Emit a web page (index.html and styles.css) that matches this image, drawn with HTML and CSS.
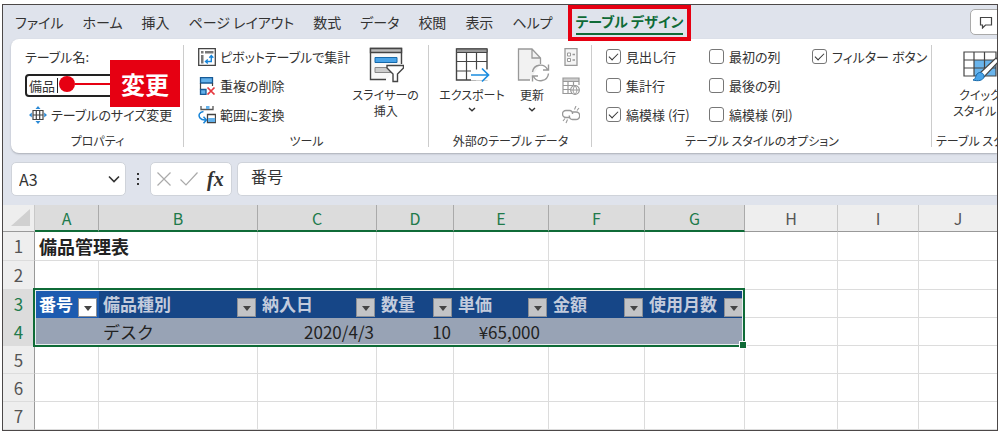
FILE: index.html
```html
<!DOCTYPE html>
<html lang="ja">
<head>
<meta charset="utf-8">
<meta name="viewport" content="width=device-width, initial-scale=1">
<title>備品管理表</title>
<link rel="stylesheet" href="styles.css">
</head>
<body>
<main class="window">
  <nav class="tabs">
    <button class="tab">ファイル</button>
    <button class="tab">ホーム</button>
    <button class="tab">挿入</button>
    <button class="tab">ページ レイアウト</button>
    <button class="tab">数式</button>
    <button class="tab">データ</button>
    <button class="tab">校閲</button>
    <button class="tab">表示</button>
    <button class="tab">ヘルプ</button>
    <button class="tab tab-active">テーブル デザイン</button>
    <button class="comment" aria-label="コメント">
      <svg width="14" height="13" viewBox="0 0 14 13"><path d="M1.5 1.5h11v7.5H6.5L3.5 12V9h-2z" fill="none" stroke="#444" stroke-width="1.2"/></svg>
    </button>
  </nav>

  <section class="ribbon">
    <div class="group group-properties">
      <div class="group-body rows">
        <label class="row" for="table-name">テーブル名:</label>
        <div class="row">
          <div class="name-field">
            <input id="table-name" type="text" value="備品">
            <span class="caret"></span>
            <span class="callout"><span class="callout-dot"></span><span class="callout-line"></span><strong class="callout-text">変更</strong></span>
          </div>
        </div>
        <button class="row command command-resize">
          <svg width="18" height="18" viewBox="0 0 18 18"><path d="M4 4.500h10v9H4zM4 9h10M7.300 4.500v9M10.700 4.500v9" fill="none" stroke="#444" stroke-width="1.200"/><path d="M9 0l2.500 3h-5zM9 18l2.500-3h-5zM0 9l2.800-2.500v5zM18 9l-2.800-2.500v5z" fill="#2b8ad6"/></svg>
          テーブルのサイズ変更
        </button>
      </div>
      <div class="group-name">プロパティ</div>
    </div>

    <div class="group group-tools">
      <div class="group-body">
        <div class="rows">
          <button class="row command">
            <svg width="18" height="18" viewBox="0 0 18 18"><path d="M.7.7h16.600v16.600H.7z" fill="#fff" stroke="#444" stroke-width="1.300"/><path d="M3 3h2.500v2.500H3zM7 3h8.500v2.500H7zM3 7h2.500v8.500H3z" fill="#777"/><path d="M13.300 8v5.500H8M11.300 9.800l2-2.300 2 2.300M9.800 11.500l-2.300 2 2.300 2" fill="none" stroke="#1784d8" stroke-width="1.400"/></svg>
            ピボットテーブルで集計
          </button>
          <button class="row command">
            <svg width="18" height="18" viewBox="0 0 18 18"><path d="M2.500.7h12V6h-12z" fill="#62b0ea" stroke="#175a96" stroke-width="1.300"/><path d="M2.500 6v6.500M14.500 6v3" stroke="#444" stroke-width="1.200"/><path d="M2.500 12.500h5.500v5H2.500z" fill="#62b0ea" stroke="#175a96" stroke-width="1.300"/><path d="M9.500 10.500l7 7M16.500 10.500l-7 7" stroke="#e5383f" stroke-width="1.700"/></svg>
            重複の削除
          </button>
          <button class="row command">
            <svg width="18" height="18" viewBox="0 0 18 18"><path d="M3 0v3.500h12V0" fill="#fff" stroke="#555" stroke-width="1.300"/><path d="M8 0h3.500v3H8z" fill="#62b0ea"/><path d="M9.500 8.500h8v8h-8z" fill="#fff" stroke="#444" stroke-width="1.300"/><path d="M10 12h7.200v4H10z" fill="#62b0ea"/><path d="M5.500 5.500C1 6 .2 9.500 2 12c1.500 2 3.500 2.200 6 2M5.500 10.800L8.500 14l-3 3.300" fill="none" stroke="#1784d8" stroke-width="1.500"/></svg>
            範囲に変換
          </button>
        </div>
        <button class="big">
          <svg width="36" height="36" viewBox="0 0 36 36"><path d="M18 32.500H2.500V1.500h31V17" fill="#f8f8f8" stroke="#444" stroke-width="1.400"/><path d="M2.500 1.500h31v4h-31z" fill="#bbb" stroke="#444" stroke-width="1.400"/><path d="M7 10.500h22v5H7z" fill="#48a3e8" stroke="#1669aa"/><path d="M7 20.500h12l4 5H7z" fill="#ccc" stroke="#888"/><path d="M19 18.500h16.500v2.500L29.500 27v7.500h-4.500V27L19 21z" fill="#fff" stroke="#444" stroke-width="1.400"/></svg>
          <span>スライサーの<br>挿入</span>
        </button>
      </div>
      <div class="group-name">ツール</div>
    </div>

    <div class="group group-external">
      <div class="group-body">
        <button class="big">
          <svg width="36" height="36" viewBox="0 0 36 36"><path d="M2.500 2h30.500v31H2.500z" fill="#fff"/><path d="M33 22V2H2.500v31H22" fill="none" stroke="#444" stroke-width="1.400"/><path d="M2.500 2H33v3.500H2.500z" fill="#999" stroke="#444"/><path d="M2.500 14.500H33M2.500 24H22M12.500 5v28M22.500 5v28M33 22v11H22" fill="none" stroke="#444" stroke-width="1.200"/><path d="M17 22.500h18v11H17z" fill="#fff"/><path d="M17 28h17M28 21.500l6.500 6.500-6.500 6.500" fill="none" stroke="#1b8de0" stroke-width="1.700"/></svg>
          <span>エクスポート</span>
          <svg class="chev" width="8" height="5" viewBox="0 0 8 5"><path d="M1 1l3 2.700L7 1" fill="none" stroke="#333" stroke-width="1.400"/></svg>
        </button>
        <button class="big big-refresh">
          <svg width="36" height="36" viewBox="0 0 36 36"><path d="M16 33H4.500V2H18l8 9v6" fill="#f2f2f2"/><path d="M16 33H4.500V2H18l8.500 9v6M18 2v9h8.500" fill="none" stroke="#999" stroke-width="1.300"/><path d="M18.500 25a8 8 0 0 1 15-2.500M34.500 26.500a8 8 0 0 1-15 3M34.500 17.500v5.500H29M18.500 34.500v-5.500H24" fill="none" stroke="#999" stroke-width="1.400"/></svg>
          <span>更新</span>
          <svg class="chev" width="8" height="5" viewBox="0 0 8 5"><path d="M1 1l3 2.700L7 1" fill="none" stroke="#333" stroke-width="1.400"/></svg>
        </button>
        <div class="rows">
          <button class="row command" aria-label="プロパティ"><svg width="18" height="18" viewBox="0 0 18 18"><path d="M3 .7h12v16.600H3z" fill="#f5f5f5" stroke="#999" stroke-width="1.300"/><path d="M5.500 5h3v3h-3zM5.500 10.500h3v3h-3z" fill="#fff" stroke="#999"/><path d="M10.500 6.500H13M10.500 12H13" stroke="#999" stroke-width="1.300"/></svg></button>
          <button class="row command" aria-label="ブラウザーで開く"><svg width="18" height="18" viewBox="0 0 18 18"><path d="M1 1h16v3H1z" fill="#ccc"/><path d="M10 16.500H1V1h16v7M1 4.500h16M1 8.500h10M1 12.500h8M6 4.500v12M11.500 4.500v4" fill="none" stroke="#999" stroke-width="1.200"/><circle cx="13" cy="13" r="4.300" fill="#fff" stroke="#999" stroke-width="1.200"/><path d="M8.700 13h8.600M13 8.700c-2.500 3-2.500 6 0 8.600M13 8.700c2.500 3 2.500 6 0 8.600" fill="none" stroke="#999"/></svg></button>
          <button class="row command" aria-label="リンク解除"><svg width="18" height="18" viewBox="0 0 18 18"><path d="M7.500 11.500H4a3.500 3.500 0 0 1 0-7h3.500c2 0 3.300 1.800 3 3.500M10.500 6H14a3.700 3.700 0 0 1 0 7.500h-3.500c-2 0-3.500-1.800-3-4" fill="none" stroke="#999" stroke-width="1.400"/><path d="M12.500 3.500L14 0M15 4.500L17 2M5.500 13.500L4 17M3 12.500L1 15" stroke="#999" stroke-width="1.100"/></svg></button>
        </div>
      </div>
      <div class="group-name">外部のテーブル データ</div>
    </div>

    <div class="group group-options">
      <div class="group-body checks">
        <label class="row"><input type="checkbox" checked>見出し行</label>
        <label class="row"><input type="checkbox">最初の列</label>
        <label class="row"><input type="checkbox" checked>フィルター ボタン</label>
        <label class="row"><input type="checkbox">集計行</label>
        <label class="row check-wide"><input type="checkbox">最後の列</label>
        <label class="row"><input type="checkbox" checked>縞模様 (行)</label>
        <label class="row check-wide"><input type="checkbox">縞模様 (列)</label>
      </div>
      <div class="group-name">テーブル スタイルのオプション</div>
    </div>

    <div class="group group-styles">
      <div class="group-body">
        <button class="big">
          <svg width="36" height="36" viewBox="0 0 36 36"><path d="M2 5h32v24H2z" fill="#fff"/><path d="M12 13h22v16H12z" fill="#69b4ec"/><path d="M2 5h32v24H2zM2 13h32M2 21h32M12 5v24M22.500 5v24" fill="none" stroke="#444" stroke-width="1.200"/><path d="M34 11l3 3-15 16-4-4z" fill="#fff" stroke="#444" stroke-width="1.200"/><path d="M17.500 25.500c3 0 5 2 4.500 4.500-1 3.500-6 4.500-11 3 3.500-1 2-6.500 6.500-7.500z" fill="#48a3e8" stroke="#1669aa"/></svg>
          <span>クイック<br>スタイル <svg width="8" height="5" viewBox="0 0 8 5"><path d="M1 1l3 2.700L7 1" fill="none" stroke="#333" stroke-width="1.400"/></svg></span>
        </button>
      </div>
      <div class="group-name">テーブル スタイル</div>
    </div>
  </section>

  <section class="formula">
    <div class="box cell-name">
      <input type="text" value="A3" aria-label="名前ボックス">
      <button aria-label="名前の一覧"><svg width="12" height="8" viewBox="0 0 12 8"><path d="M1 1.500l5 5 5-5" fill="none" stroke="#333" stroke-width="1.600"/></svg></button>
    </div>
    <svg class="dots" width="4" height="14" viewBox="0 0 4 14"><path d="M1 1h2v2H1zM1 6h2v2H1zM1 11h2v2H1z" fill="#333"/></svg>
    <div class="box actions">
      <button aria-label="キャンセル"><svg width="14" height="14" viewBox="0 0 14 14"><path d="M.5.5l13 13M13.500.5l-13 13" stroke="#aaa" stroke-width="1.200"/></svg></button>
      <button aria-label="入力"><svg width="18" height="14" viewBox="0 0 18 14"><path d="M.5 7.500L6 13 17.500.5" fill="none" stroke="#aaa" stroke-width="1.200"/></svg></button>
      <button class="fx" aria-label="関数の挿入">fx</button>
    </div>
    <input class="box formula-text" type="text" value="番号" aria-label="数式バー">
  </section>

  <table class="sheet">
    <colgroup>
      <col class="col-head"><col class="col-a"><col class="col-b"><col class="col-c"><col class="col-d"><col class="col-e"><col class="col-f"><col class="col-g"><col class="col-h"><col class="col-i"><col>
    </colgroup>
    <thead>
      <tr>
        <th class="corner"><svg width="20" height="20" viewBox="0 0 20 20"><path d="M19 1v17H0z" fill="#d0d0d0"/></svg></th>
        <th class="on">A</th><th class="on">B</th><th class="on">C</th><th class="on">D</th><th class="on">E</th><th class="on">F</th><th class="on">G</th><th>H</th><th>I</th><th>J</th>
      </tr>
    </thead>
    <tbody>
      <tr class="tall"><th>1</th><td class="title" colspan="2">備品管理表</td><td></td><td></td><td></td><td></td><td></td><td></td><td></td><td></td></tr>
      <tr class="tall"><th>2</th><td></td><td></td><td></td><td></td><td></td><td></td><td></td><td></td><td></td><td></td></tr>
      <tr>
        <th class="on">3</th>
        <td class="field current"><div>番号<button aria-label="番号のフィルター"></button></div><span class="selection"></span></td>
        <td class="field"><div>備品種別<button aria-label="備品種別のフィルター"></button></div></td>
        <td class="field"><div>納入日<button aria-label="納入日のフィルター"></button></div></td>
        <td class="field"><div>数量<button aria-label="数量のフィルター"></button></div></td>
        <td class="field"><div>単価<button aria-label="単価のフィルター"></button></div></td>
        <td class="field"><div>金額<button aria-label="金額のフィルター"></button></div></td>
        <td class="field"><div>使用月数<button aria-label="使用月数のフィルター"></button></div></td>
        <td></td><td></td><td></td>
      </tr>
      <tr>
        <th class="on">4</th>
        <td class="band"></td><td class="band">デスク</td><td class="band num">2020/4/3</td><td class="band num">10</td><td class="band num money">¥65,000</td><td class="band"></td><td class="band"></td>
        <td></td><td></td><td></td>
      </tr>
      <tr><th>5</th><td></td><td></td><td></td><td></td><td></td><td></td><td></td><td></td><td></td><td></td></tr>
      <tr><th>6</th><td></td><td></td><td></td><td></td><td></td><td></td><td></td><td></td><td></td><td></td></tr>
      <tr><th>7</th><td></td><td></td><td></td><td></td><td></td><td></td><td></td><td></td><td></td><td></td></tr>
    </tbody>
  </table>
</main>
</body>
</html>
```
FILE: styles.css
```css
*,
*::before,
*::after {
  box-sizing: border-box;
}

body {
  margin: 0;
  padding: 4px 2px 3px;
  background: #fff;
  color: #333;
  font-family: "Noto Sans CJK JP", sans-serif;
  font-size: 13px;
}

button,
input {
  margin: 0;
  padding: 0;
  border: 0;
  background: none;
  color: inherit;
  font: inherit;
}

svg {
  flex: none;
}

.window {
  overflow: hidden;
  border: 1px solid #4c4848;
  background: #dfe3ec;
}

/* Tabs */
.tabs {
  display: flex;
  align-items: center;
  gap: 19px;
  height: 34px;
  padding-left: 12px;
  font-size: 14px;
  font-feature-settings: "palt";
}

.tab {
  position: relative;
  flex: none;
  line-height: 24px;
  white-space: nowrap;
}

.tab-active {
  margin-left: 4px;
  border-bottom: 2px solid #0f6b37;
  color: #0f6b37;
  font-weight: 700;
}

.tab-active::after {
  content: "";
  position: absolute;
  z-index: 1;
  inset: -4px -8px -8px;
  border: 4px solid #e60012;
}

.comment {
  display: flex;
  flex: none;
  align-items: center;
  width: 60px;
  height: 26px;
  margin-left: auto;
  margin-right: -33px;
  padding-left: 8px;
  border: 1px solid #aaa;
  border-radius: 5px;
  background: #fff;
}

/* Ribbon */
.ribbon {
  display: flex;
  margin-left: 8px;
  padding-top: 3px;
  border-radius: 8px 0 0 8px;
  background: #fff;
  box-shadow: 0 1px 2px #a9adb5;
  font-feature-settings: "palt";
}

.group {
  position: relative;
  display: flex;
  flex: none;
  flex-direction: column;
}

.group:not(:last-child)::after {
  content: "";
  position: absolute;
  inset: 3px 0 6px auto;
  width: 1px;
  background: #ccc;
}

.group-properties {
  width: 173px;
}

.group-tools {
  width: 245px;
}

.group-external {
  width: 163px;
}

.group-options {
  width: 340px;
}

.group-styles {
  flex: 1 0 96px;
  margin-right: -33px;
}

.group-body {
  display: flex;
  height: 87px;
}

.group-name {
  font-size: 12px;
  line-height: 24px;
  text-align: center;
  white-space: nowrap;
}

.rows {
  display: flex;
  flex-direction: column;
}

.row {
  display: flex;
  align-items: center;
  height: 29px;
  white-space: nowrap;
}

.command {
  gap: 4px;
}

.group-properties .rows {
  padding-left: 14px;
}

.command-resize {
  margin-left: 4px;
}

.name-field {
  position: relative;
  width: 140px;
  height: 23px;
  border: 2px solid #222;
  border-radius: 4px;
}

.name-field input {
  width: 100%;
  height: 100%;
  padding-left: 2px;
  outline: none;
}

.caret {
  position: absolute;
  top: 2px;
  left: 30px;
  width: 1px;
  height: 15px;
  background: #222;
}

.callout {
  position: absolute;
  z-index: 1;
  top: -16px;
  left: 32px;
  display: flex;
  align-items: center;
  color: #fff;
}

.callout-dot {
  width: 16px;
  height: 16px;
  border-radius: 50%;
  background: #e60012;
}

.callout-line {
  width: 35px;
  height: 2px;
  background: #e60012;
}

.callout-text {
  width: 70px;
  background: #e60012;
  font-size: 24px;
  line-height: 47px;
  text-align: center;
}

.group-tools .group-body {
  justify-content: space-between;
  padding: 0 8px 0 14px;
}

.big {
  display: flex;
  flex-direction: column;
  align-items: center;
  width: 72px;
  padding-top: 5px;
  font-size: 12px;
  line-height: 16px;
  white-space: nowrap;
}

.big span {
  margin-top: 4px;
}

.chev {
  margin-top: 4px;
}

.group-external .group-body {
  padding-left: 7px;
}

.big-refresh {
  width: 48px;
}

.group-external .rows {
  padding-left: 6px;
}

.checks {
  display: grid;
  grid-template-columns: 103px 103px 120px;
  grid-template-rows: repeat(3, 29px);
  padding-left: 14px;
}

.check-wide {
  grid-column: 2 / 4;
}

.checks input {
  display: flex;
  align-items: center;
  justify-content: center;
  width: 15px;
  height: 15px;
  margin-right: 5px;
  border: 1px solid #777;
  border-radius: 3px;
  background: #fff;
  appearance: none;
}

.checks input:checked::before {
  content: "";
  width: 9px;
  height: 5px;
  margin-bottom: 3px;
  border: solid #333;
  border-width: 0 0 1px 1px;
  rotate: -45deg;
}

.group-styles .big {
  width: 96px;
}

.group-styles .group-name {
  padding-left: 4px;
  text-align: left;
}

/* Formula bar */
.formula {
  display: flex;
  gap: 5px;
  padding: 9px 0 9px 8px;
  font-size: 16px;
}

.box {
  height: 34px;
  border: 1px solid #cfd3da;
  border-radius: 5px;
  background: #fff;
}

.cell-name {
  display: flex;
  align-items: center;
  width: 115px;
  padding: 0 5px 0 7px;
}

.cell-name input {
  flex: 1;
  min-width: 0;
}

.cell-name button {
  display: flex;
}

.dots {
  align-self: center;
  margin: 0 5px;
}

.actions {
  display: flex;
  align-items: center;
  gap: 9px;
  width: 82px;
  padding-left: 6px;
}

.actions button {
  display: flex;
}

.actions .fx {
  font-family: "Liberation Serif", serif;
  font-size: 20px;
  font-style: italic;
  font-weight: 700;
  line-height: 24px;
}

.formula-text {
  flex: 1;
  min-width: 0;
  padding: 0 13px 6px;
  border-right: 0;
  border-radius: 5px 0 0 5px;
}

/* Sheet */
.sheet {
  width: 100%;
  border-collapse: separate;
  border-spacing: 0;
  table-layout: fixed;
  background: #fff;
  font-size: 17px;
}

.col-head {
  width: 32px;
}

.col-a {
  width: 64px;
}

.col-b {
  width: 159px;
}

.col-c {
  width: 119px;
}

.col-d {
  width: 77px;
}

.col-e {
  width: 95px;
}

.col-f {
  width: 96px;
}

.col-g {
  width: 100px;
}

.col-h {
  width: 93px;
}

.col-i {
  width: 81px;
}

.sheet th,
.sheet td {
  height: 28px;
  padding: 0 4px;
  border-right: 1px solid #dcdcdc;
  border-bottom: 1px solid #dcdcdc;
  line-height: 26px;
  white-space: nowrap;
}

.sheet th {
  padding: 0;
  background: #eee;
  color: #555;
  font-size: 16px;
  font-weight: 400;
  text-align: center;
}

.sheet tbody th {
  border-right-color: #999;
  font-size: 17px;
}

.sheet .tall > * {
  height: 29px;
}

.sheet thead th {
  height: 27px;
  border-right-color: #c8c8c8;
  border-bottom: 1px solid #999;
  line-height: 24px;
}

.sheet th.on {
  background: #dcdcdc;
  color: #217a4b;
}

.sheet thead th.on {
  border-right-color: #aaa;
  border-bottom: 2px solid #0f6b37;
}

.corner svg {
  display: block;
  margin-left: 8px;
}

.sheet .title {
  color: #222;
  font-size: 18px;
  font-weight: 700;
}

.sheet tr > :last-child {
  border-right: 0;
}

.sheet .field {
  position: relative;
  padding: 0 1px 0 4px;
  border-color: #164687;
  background: #164687;
  color: #c3cbdc;
  font-weight: 700;
}

.sheet .current {
  border-color: #1c5bb0;
  background: #1c5bb0;
  color: #fff;
}

.field div {
  display: flex;
  justify-content: space-between;
}

.field button {
  align-self: flex-end;
  width: 19px;
  height: 19px;
  border: 1px solid #8d9096;
  background: #c3c4c6;
}

.field button::before {
  content: "";
  display: block;
  width: 8px;
  margin: 2px auto 0;
  border: solid transparent;
  border-width: 5px 4px 0;
  border-top-color: #444;
}

.current button {
  background: #fff;
}

.sheet .band {
  border-color: #98a3b5;
  background: #98a3b5;
  color: #222;
}

.sheet .num {
  padding-right: 2px;
  text-align: right;
}

.sheet .money {
  padding-right: 8px;
}

/* Outline of the selected range A3:G4 */
.selection {
  position: absolute;
  z-index: 1;
  top: -2px;
  left: -2px;
  width: 712px;
  height: 59px;
  border: 2px solid #0f6b37;
  box-shadow: inset 0 0 0 1px #e8eef0;
  pointer-events: none;
}

.selection::after {
  content: "";
  position: absolute;
  right: -4px;
  bottom: -4px;
  width: 8px;
  height: 8px;
  border: 1px solid #fff;
  background: #0f6b37;
}
```
